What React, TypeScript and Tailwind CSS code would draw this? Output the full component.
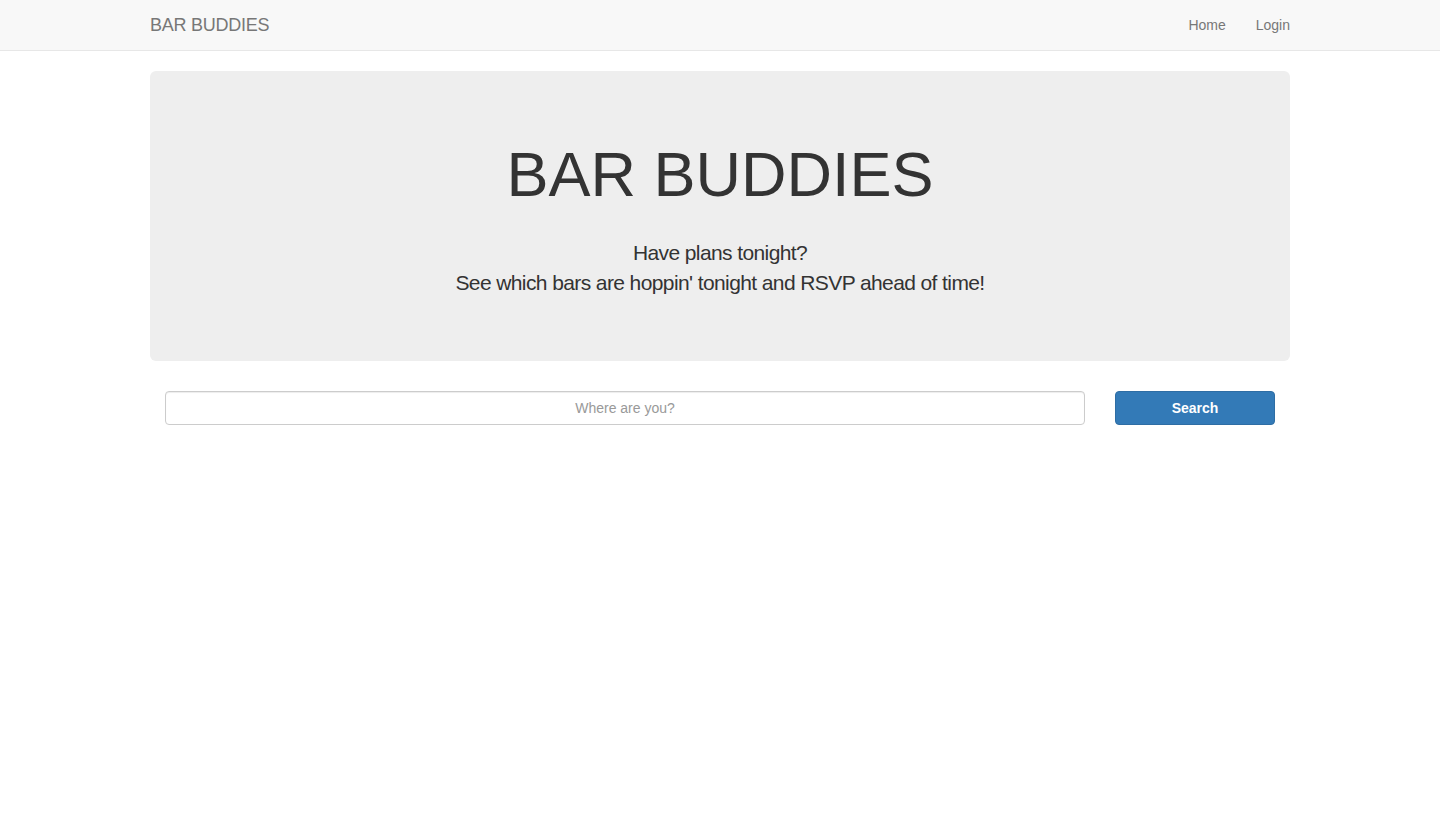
export default function App() {
  return (
    <div className="min-h-screen bg-white font-['Liberation_Sans',Helvetica,Arial,sans-serif] text-[14px] text-[#333]">
      {/* Navbar */}
      <nav className="h-[51px] border-b border-[#e7e7e7] bg-[#f8f8f8]">
        <div className="mx-auto flex h-[50px] w-[1170px] items-center justify-between px-[15px]">
          <a href="#" className="text-[18px] leading-[20px] tracking-[-0.25px] text-[#777]">
            BAR BUDDIES
          </a>
          <ul className="flex items-center gap-[30px] text-[14px] leading-[20px] text-[#777]">
            <li>
              <a href="#">Home</a>
            </li>
            <li>
              <a href="#">Login</a>
            </li>
          </ul>
        </div>
      </nav>

      <div className="mx-auto w-[1170px] px-[15px] pt-[20px]">
        {/* Jumbotron */}
        <div className="rounded-[6px] bg-[#eeeeee] px-[60px] pb-[48px] pt-[48px] text-center">
          <h1 className="mt-[21px] text-[63px] leading-[69px] text-[#333]">
            BAR BUDDIES
          </h1>
          <p className="mb-[15px] mt-[29px] text-[21px] font-light leading-[30px] tracking-[-0.6px] text-[#333]">
            Have plans tonight?
            <br />
            See which bars are hoppin' tonight and RSVP ahead of time!
          </p>
        </div>

        {/* Search */}
        <form className="mt-[30px] flex items-center gap-[30px] px-[15px]">
          <input
            type="text"
            placeholder="Where are you?"
            className="h-[34px] w-[920px] rounded-[4px] border border-[#ccc] bg-white px-[12px] text-center text-[14px] text-[#555] shadow-[inset_0_1px_1px_rgba(0,0,0,0.075)] outline-none placeholder:text-[#999]"
          />
          <button
            type="button"
            className="h-[34px] w-[160px] rounded-[4px] border border-[#2e6da4] bg-[#337ab7] text-[14px] font-bold text-white"
          >
            Search
          </button>
        </form>
      </div>
    </div>
  );
}
